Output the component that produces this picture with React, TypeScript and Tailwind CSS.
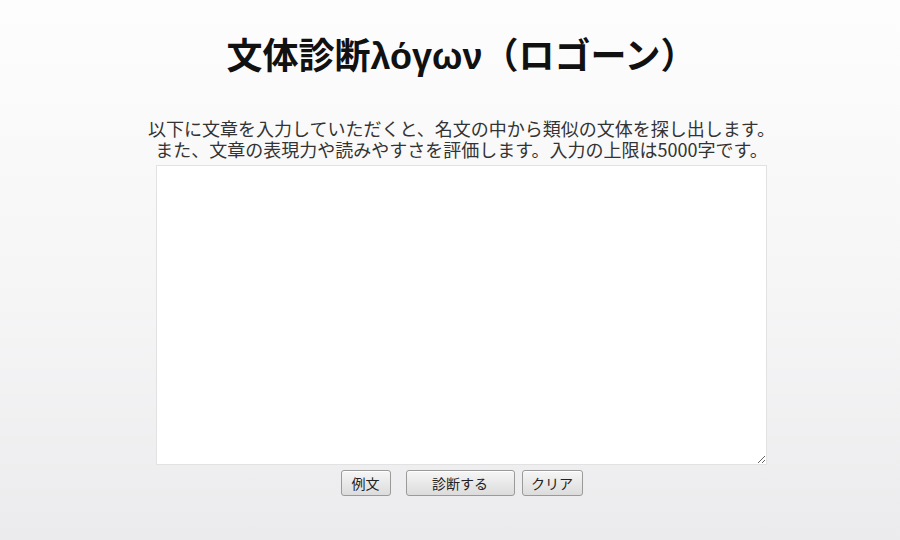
const jp = "font-['Noto_Sans_CJK_JP',sans-serif]";

function Btn({ label, w }: { label: string; w: string }) {
  return (
    <button
      type="button"
      className={`${w} h-[26px] rounded-[3px] border border-[#9a9a9a] bg-linear-to-b from-[#f6f6f6] to-[#dcdcdc] text-[14px] leading-none text-[#222] shadow-[inset_0_1px_0_#fff] ${jp}`}
    >
      {label}
    </button>
  );
}

export default function App() {
  return (
    <div
      className={`min-h-[540px] w-full bg-linear-to-b from-[#fdfdfd] via-[#f7f6f7] to-[#ebebed] pl-[23px] ${jp}`}
    >
      <div className="flex flex-col items-center">
        <h1 className="mt-[33px] font-['Liberation_Sans','Noto_Sans_CJK_JP',sans-serif] text-[36px] font-bold leading-[48px] text-[#111]">
          文体診断λόγων（ロゴーン）
        </h1>
        <p className="mt-[37px] text-center text-[18px] leading-[21px] text-[#333]">
          以下に文章を入力していただくと、名文の中から類似の文体を探し出します。
          <br />
          また、文章の表現力や読みやすさを評価します。入力の上限は5000字です。
        </p>
        <textarea className="mt-[5px] h-[300px] w-[611px] resize border border-[#e2e2e2] bg-white p-1 text-[14px] outline-none" />
        <div className="mt-[5px] flex items-center">
          <Btn label="例文" w="w-[50px]" />
          <div className="w-[15px]" />
          <Btn label="診断する" w="w-[109px]" />
          <div className="w-[7px]" />
          <Btn label="クリア" w="w-[61px]" />
        </div>
      </div>
    </div>
  );
}
